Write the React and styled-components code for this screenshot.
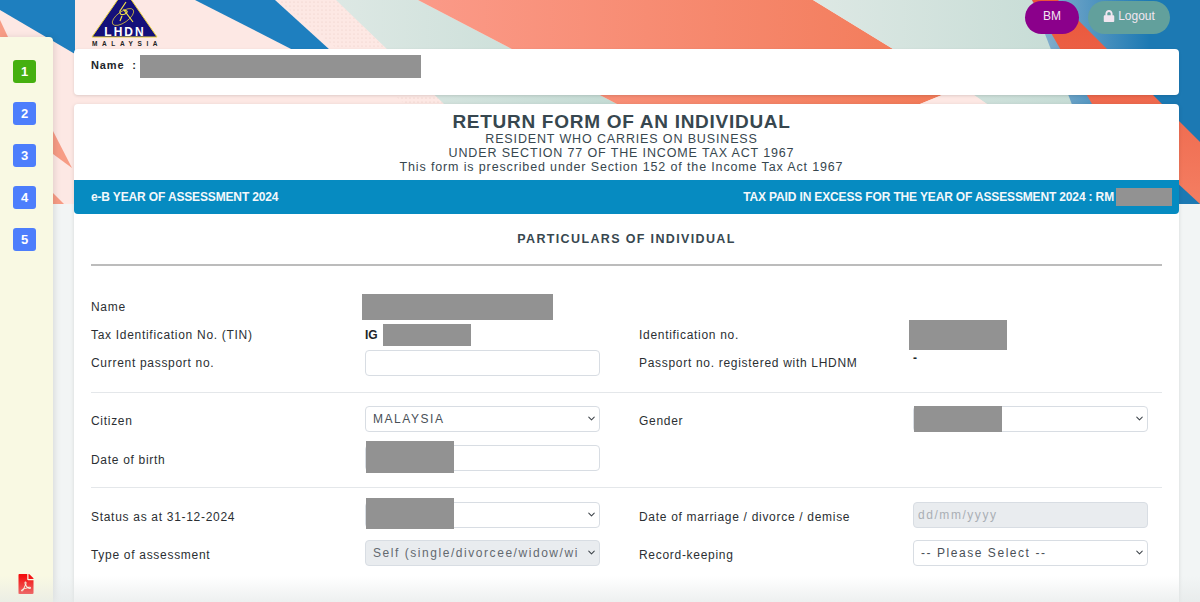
import React from "react";
import styled, { createGlobalStyle } from "styled-components";
import { FaLock, FaFilePdf } from "react-icons/fa";
import { ChevronDown } from "lucide-react";

const GlobalStyle = createGlobalStyle`
  html, body, #root { height: 100%; margin: 0; }
  body {
    overflow: hidden;
    background: #f2f5f5;
    font-family: "Liberation Sans", Arial, sans-serif;
    color: #212529;
  }
  * { box-sizing: border-box; }
`;

const Page = styled.div`
  position: relative;
  display: flex;
  height: 100vh;
  overflow: hidden;
`;

const Banner = styled.svg`
  position: absolute;
  top: 0;
  left: 0;
`;

const BottomFade = styled.div`
  position: absolute;
  left: 0;
  right: 0;
  bottom: 0;
  height: 26px;
  background: linear-gradient(rgba(226, 230, 230, 0), rgba(226, 230, 230, 0.6));
  pointer-events: none;
`;

const Sidebar = styled.aside`
  position: relative;
  flex: none;
  display: flex;
  flex-direction: column;
  align-items: flex-start;
  gap: 19px;
  width: 53px;
  margin-top: 37px;
  padding: 23px 0 8px 13px;
  background: #f9f9e3;
  border-top-right-radius: 4px;
  box-shadow: 2px 0 6px rgba(0, 0, 0, 0.1);
`;

const StepButton = styled.div`
  display: flex;
  align-items: center;
  justify-content: center;
  width: 23px;
  height: 23px;
  border-radius: 3px;
  background: ${(p) => (p.$active ? "#46b010" : "#4d7efc")};
  color: #fff;
  font-size: 13px;
  font-weight: 700;
`;

const PdfLink = styled.div`
  margin-top: auto;
  margin-left: 3px;
  display: flex;
  color: #f40f0f;
  font-size: 20px;
`;

const Main = styled.main`
  position: relative;
  flex: none;
  width: 1105px;
  margin-left: 21px;
  display: flex;
  flex-direction: column;
`;

const Header = styled.header`
  display: flex;
  justify-content: space-between;
  height: 49px;
  padding: 1px 9px 0 17px;
`;

const HeaderButtons = styled.div`
  display: flex;
  gap: 9px;
`;

const PillButton = styled.div`
  display: flex;
  align-items: center;
  justify-content: center;
  gap: 3px;
  width: ${(p) => p.$w}px;
  height: 33px;
  padding-bottom: 3px;
  border-radius: 17px;
  background: ${(p) => p.$bg};
  color: #f1e6f0;
  font-size: 12px;
`;

const NameCard = styled.section`
  display: flex;
  gap: 3px;
  height: 46px;
  padding: 6px 17px 0;
  background: #fff;
  border-radius: 4px;
  box-shadow: 0 1px 3px rgba(0, 0, 0, 0.12);
  font-size: 11px;
  font-weight: 700;
  letter-spacing: 0.85px;
  line-height: 20px;
`;

const NameLabel = styled.span`
  white-space: pre;
`;

const Redact = styled.div`
  flex: none;
  width: ${(p) => p.$w}px;
  height: ${(p) => p.$h}px;
  background: #929292;
`;

const FormCard = styled.section`
  flex: 1;
  margin-top: 9px;
  background: #fff;
  border-radius: 4px 4px 0 0;
  box-shadow: 0 1px 4px rgba(0, 0, 0, 0.12);
`;

const TitleBlock = styled.div`
  height: 76px;
  padding: 7px 10px 0 0;
  text-align: center;
  color: #37474f;
`;

const Title = styled.h1`
  margin: 0;
  font-size: 19px;
  line-height: 21px;
  letter-spacing: 0.72px;
  font-weight: 700;
`;

const SubTitle = styled.div`
  font-size: 12.5px;
  line-height: 14px;
  letter-spacing: 0.86px;
`;

const InfoBar = styled.div`
  display: flex;
  align-items: center;
  justify-content: space-between;
  height: 34px;
  padding: 0 7px 0 17px;
  background: #068bc1;
  border-radius: 0 0 4px 4px;
  color: #f3f8fb;
  font-size: 12px;
  font-weight: 700;
  letter-spacing: -0.15px;
`;

const TaxPaid = styled.div`
  display: flex;
  align-items: center;
  gap: 2px;
`;

const FormBody = styled.div`
  padding: 0 17px;
`;

const SectionTitle = styled.h2`
  margin: 0;
  padding: 17px 0 16px;
  border-bottom: 2px solid #bcbcbc;
  text-align: center;
  color: #37474f;
  font-size: 12.5px;
  line-height: 17px;
  font-weight: 700;
  letter-spacing: 1.36px;
`;

const Group = styled.div`
  display: grid;
  grid-template-columns: 274px 274px 274px 235px;
  grid-auto-rows: ${(p) => p.$row}px;
  row-gap: ${(p) => p.$gap}px;
  align-items: center;
  margin-top: ${(p) => p.$top}px;
  padding-bottom: ${(p) => p.$bottom}px;
  border-bottom: ${(p) => (p.$line ? "1px solid #e4e7ea" : "none")};
`;

const Label = styled.label`
  padding-top: ${(p) => (p.$low ? 3 : 0)}px;
  font-size: 12px;
  letter-spacing: 0.7px;
  color: #2b2f33;
`;

const Value = styled.div`
  display: flex;
  align-items: center;
  gap: 5px;
  height: 100%;
  margin-left: ${(p) => p.$shift || 0}px;
  font-size: 12px;
  font-weight: 700;
`;

const Dash = styled.div`
  align-self: start;
  margin-top: 2px;
  font-size: 12px;
  font-weight: 700;
`;

const Field = styled.div`
  position: relative;
  width: 235px;
  height: 26px;
`;

const controlStyle = `
  width: 100%;
  height: 100%;
  padding: 0 20px 0 7px;
  border: 1px solid #d8dde3;
  border-radius: 4px;
  outline: none;
  font-family: "Liberation Sans", Arial, sans-serif;
  font-size: 12px;
  letter-spacing: 1.55px;
  color: #495057;
`;

const Input = styled.input`
  ${controlStyle}
  padding: 0 8px 0 4px;
  background: ${(p) => (p.disabled ? "#e9ecef" : "#fff")};
  &::placeholder { color: #a9afb5; opacity: 1; }
`;

const Select = styled.select`
  ${controlStyle}
  appearance: none;
  opacity: 1;
  color: ${(p) => (p.disabled ? "#63696f" : "#495057")};
  background: ${(p) => (p.disabled ? "#e9ecef" : "#fff")};
`;

const Chevron = styled(ChevronDown)`
  position: absolute;
  top: 7px;
  right: 3px;
  color: #3d4349;
  pointer-events: none;
`;

const FieldCover = styled(Redact)`
  position: absolute;
  left: 1px;
  top: ${(p) => p.$y}px;
`;

function SelectField({ value, disabled, cover }) {
  return (
    <Field>
      <Select disabled={disabled} defaultValue={value}>
        <option value={value}>{value}</option>
      </Select>
      {cover}
      <Chevron size={11} strokeWidth={2.2} />
    </Field>
  );
}

function BannerArt() {
  return (
    <Banner width="1200" height="204" viewBox="0 0 1200 204">
      <defs>
        <linearGradient id="salmon" x1="0" x2="1" y1="0" y2="0">
          <stop offset="0" stopColor="#fb9a88" />
          <stop offset="1" stopColor="#f27a58" />
        </linearGradient>
        <linearGradient id="sage" x1="0" x2="1" y1="0" y2="0">
          <stop offset="0" stopColor="#dde8e4" />
          <stop offset="1" stopColor="#c4dbd4" />
        </linearGradient>
        <linearGradient id="sky" x1="0" x2="1" y1="0" y2="0">
          <stop offset="0" stopColor="#8db4cf" />
          <stop offset="0.7" stopColor="#1c79b3" />
          <stop offset="1" stopColor="#1c79b3" />
        </linearGradient>
        <linearGradient id="coral" x1="0" x2="0" y1="0" y2="1">
          <stop offset="0" stopColor="#e9553a" />
          <stop offset="1" stopColor="#f47e62" />
        </linearGradient>
        <pattern id="dots" width="4" height="4" patternUnits="userSpaceOnUse">
          <circle cx="2" cy="2" r="0.6" fill="#e6c9c2" />
        </pattern>
      </defs>
      <rect width="1200" height="204" fill="#fde8e4" />
      <polygon points="0,10 75,54 75,0 0,0" fill="#1e7fbf" />
      <polygon points="0,20 8,37 0,37" fill="#f79c85" />
      <polygon points="53,131 72,168 53,154" fill="#f79c85" />
      <polygon points="53,193 64,204 53,204" fill="#f79c85" />
      <polygon points="195,0 275,0 330,50 293,50" fill="#1e7fbf" />
      <polygon points="277,0 336,0 444,104 405,104" fill="url(#dots)" />
      <polygon points="336,0 418,0 617,104 444,104" fill="url(#sage)" />
      <polygon points="418,0 813,0 893,49 942,95 920,104 617,104" fill="url(#salmon)" />
      <polygon points="813,0 1032,0 1092,104 987,104 960,85 893,49" fill="url(#sage)" />
      <polygon points="942,95 973,95 987,104 920,104" fill="#fde8e4" />
      <polygon points="1032,0 1200,0 1200,204 1110,204" fill="url(#sky)" />
      <polygon points="1032,0 1058,0 1200,142 1200,204 1092,104" fill="url(#coral)" />
    </Banner>
  );
}

function Logo() {
  return (
    <svg width="68" height="48" viewBox="0 0 68 48" overflow="visible">
      <polygon points="33.5,-11 1,36 66,36" fill="#14107a" stroke="#e8d23a" strokeWidth="1" />
      <ellipse cx="32" cy="16" rx="12.5" ry="5.5" transform="rotate(-35 32 16)" fill="none" stroke="#e8d23a" strokeWidth="0.7" />
      <path d="M35 1 L29 10 Q28 15 34 13 Q39 10 33 9 L42 21 M31 15 L29 20" fill="none" stroke="#f0e048" strokeWidth="1.2" />
      <text x="34" y="35" textAnchor="middle" fontFamily="Liberation Sans" fontWeight="700" fontSize="12" letterSpacing="2" fill="#fff">LHDN</text>
      <text x="1" y="45" fontFamily="Liberation Sans" fontWeight="700" fontSize="6.5" letterSpacing="4.6" fill="#222">MALAYSIA</text>
    </svg>
  );
}

export default function App() {
  return (
    <>
      <GlobalStyle />
      <Page>
        <BannerArt />
        <Sidebar>
          <StepButton $active>1</StepButton>
          <StepButton>2</StepButton>
          <StepButton>3</StepButton>
          <StepButton>4</StepButton>
          <StepButton>5</StepButton>
          <PdfLink>
            <FaFilePdf />
          </PdfLink>
        </Sidebar>
        <Main>
          <Header>
            <Logo />
            <HeaderButtons>
              <PillButton $w={54} $bg="#8b008b">BM</PillButton>
              <PillButton $w={82} $bg="#62a09c">
                <FaLock size={12} /> Logout
              </PillButton>
            </HeaderButtons>
          </Header>
          <NameCard>
            <NameLabel>Name  :</NameLabel>
            <Redact $w={281} $h={23} />
          </NameCard>
          <FormCard>
            <TitleBlock>
              <Title>RETURN FORM OF AN INDIVIDUAL</Title>
              <SubTitle>RESIDENT WHO CARRIES ON BUSINESS</SubTitle>
              <SubTitle>UNDER SECTION 77 OF THE INCOME TAX ACT 1967</SubTitle>
              <SubTitle>This form is prescribed under Section 152 of the Income Tax Act 1967</SubTitle>
            </TitleBlock>
            <InfoBar>
              <span>e-B YEAR OF ASSESSMENT 2024</span>
              <TaxPaid>
                TAX PAID IN EXCESS FOR THE YEAR OF ASSESSMENT 2024 : RM
                <Redact $w={56} $h={18} />
              </TaxPaid>
            </InfoBar>
            <FormBody>
              <SectionTitle>PARTICULARS OF INDIVIDUAL</SectionTitle>
              <Group $row={28} $gap={0} $top={27} $bottom={15} $line>
                <Label>Name</Label>
                <Value $shift={-3}><Redact $w={191} $h={26} /></Value>
                <span />
                <span />
                <Label>Tax Identification No. (TIN)</Label>
                <Value>IG <Redact $w={88} $h={22} /></Value>
                <Label>Identification no.</Label>
                <Value $shift={-4}><Redact $w={98} $h={30} /></Value>
                <Label>Current passport no.</Label>
                <Field><Input /></Field>
                <Label>Passport no. registered with LHDNM</Label>
                <Dash>-</Dash>
              </Group>
              <Group $row={26} $gap={13} $top={13} $bottom={16} $line>
                <Label $low>Citizen</Label>
                <SelectField value="MALAYSIA" />
                <Label $low>Gender</Label>
                <SelectField value="" cover={<FieldCover $w={88} $h={26} $y={0} />} />
                <Label $low>Date of birth</Label>
                <Field>
                  <Input />
                  <FieldCover $w={88} $h={32} $y={-4} />
                </Field>
              </Group>
              <Group $row={26} $gap={12} $top={14} $bottom={0}>
                <Label $low>Status as at 31-12-2024</Label>
                <SelectField value="" cover={<FieldCover $w={88} $h={31} $y={-4} />} />
                <Label $low>Date of marriage / divorce / demise</Label>
                <Field><Input disabled placeholder="dd/mm/yyyy" /></Field>
                <Label $low>Type of assessment</Label>
                <SelectField disabled value="Self (single/divorcee/widow/widower)" />
                <Label $low>Record-keeping</Label>
                <SelectField value="-- Please Select --" />
              </Group>
            </FormBody>
          </FormCard>
        </Main>
        <BottomFade />
      </Page>
    </>
  );
}
